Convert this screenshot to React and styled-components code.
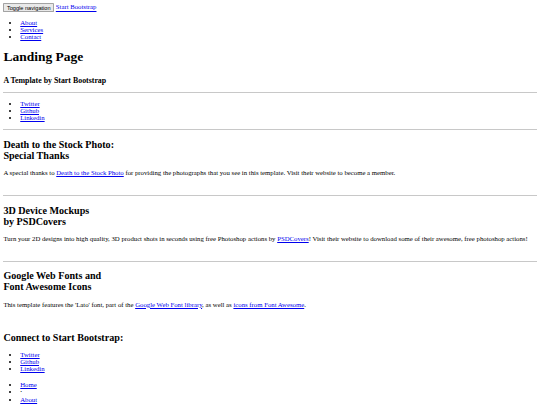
import React from "react";
import styled, { createGlobalStyle } from "styled-components";

const GlobalStyle = createGlobalStyle`
  html {
    zoom: 0.421875;
  }
  body {
    margin: 8px;
    font-family: "Liberation Serif", "Times New Roman", serif;
    font-size: 16px;
    color: #000;
    background: #fff;
  }
  a {
    color: #0000ee;
  }
`;

const NavBar = styled.nav`
  display: block;
`;

const NavHeader = styled.div`
  display: block;
`;

const ToggleButton = styled.button`
  font-family: "Liberation Sans", Arial, sans-serif;
  font-size: 13.333px;
  padding: 1px 6px;
  margin-right: 4px;
  border: 1px solid #a3a3a3;
  border-radius: 2px;
  background: #e9e9e9;
  color: #000;
`;

const Brand = styled.a``;

const LinkList = styled.ul`
  margin: ${(p) => p.$top ?? 16}px 0 ${(p) => p.$bottom ?? 16}px;
  padding-left: 40px;
  list-style: disc;
  line-height: normal;
`;

const Title = styled.h1`
  font-size: 32px;
  margin: 21.44px 0;
`;

const Subtitle = styled.h3`
  font-size: 18.72px;
  margin: 25px 0 18.72px;
`;

const Rule = styled.hr`
  margin: 8px 0;
  border: 0;
  border-top: 2px solid #c8c8c8;
  height: 0;
`;

const Section = styled.div`
  padding-bottom: 21px;
`;

const Heading = styled.h2`
  font-size: 24px;
  margin: 19.92px 0;
`;

const Lead = styled.p`
  margin: 16px 0;
`;

const Banner = styled.div`
  margin-top: 20px;
`;

const sections = [
  {
    title: ["Death to the Stock Photo:", "Special Thanks"],
    text: (
      <>
        A special thanks to <a href="#">Death to the Stock Photo</a> for
        providing the photographs that you see in this template. Visit their
        website to become a member.
      </>
    ),
  },
  {
    title: ["3D Device Mockups", "by PSDCovers"],
    text: (
      <>
        Turn your 2D designs into high quality, 3D product shots in seconds
        using free Photoshop actions by <a href="#">PSDCovers</a>! Visit their
        website to download some of their awesome, free photoshop actions!
      </>
    ),
  },
  {
    title: ["Google Web Fonts and", "Font Awesome Icons"],
    text: (
      <>
        This template features the 'Lato' font, part of the{" "}
        <a href="#">Google Web Font library</a>, as well as{" "}
        <a href="#">icons from Font Awesome</a>.
      </>
    ),
  },
];

const social = ["Twitter", "Github", "Linkedin"];

function App() {
  return (
    <>
      <GlobalStyle />
      <NavBar>
        <NavHeader>
          <ToggleButton type="button">Toggle navigation</ToggleButton>
          <Brand href="#">Start Bootstrap</Brand>
        </NavHeader>
        <LinkList>
          <li><a href="#">About</a></li>
          <li><a href="#">Services</a></li>
          <li><a href="#">Contact</a></li>
        </LinkList>
      </NavBar>

      <Title>Landing Page</Title>
      <Subtitle>A Template by Start Bootstrap</Subtitle>
      <Rule />
      <LinkList $bottom={19.5}>
        {social.map((s) => (
          <li key={s}><a href="#">{s}</a></li>
        ))}
      </LinkList>

      {sections.map((s) => (
        <Section key={s.title[0]}>
          <Rule />
          <Heading>
            {s.title[0]}
            <br />
            {s.title[1]}
          </Heading>
          <Lead>{s.text}</Lead>
        </Section>
      ))}

      <Banner>
        <Heading>Connect to Start Bootstrap:</Heading>
        <LinkList>
          {social.map((s) => (
            <li key={s}><a href="#">{s}</a></li>
          ))}
        </LinkList>
      </Banner>

      <LinkList $top={20}>
        <li><a href="#">Home</a></li>
        <li>⋅</li>
        <li><a href="#">About</a></li>
        <li>⋅</li>
        <li><a href="#">Services</a></li>
        <li>⋅</li>
        <li><a href="#">Contact</a></li>
      </LinkList>
    </>
  );
}

export default App;
